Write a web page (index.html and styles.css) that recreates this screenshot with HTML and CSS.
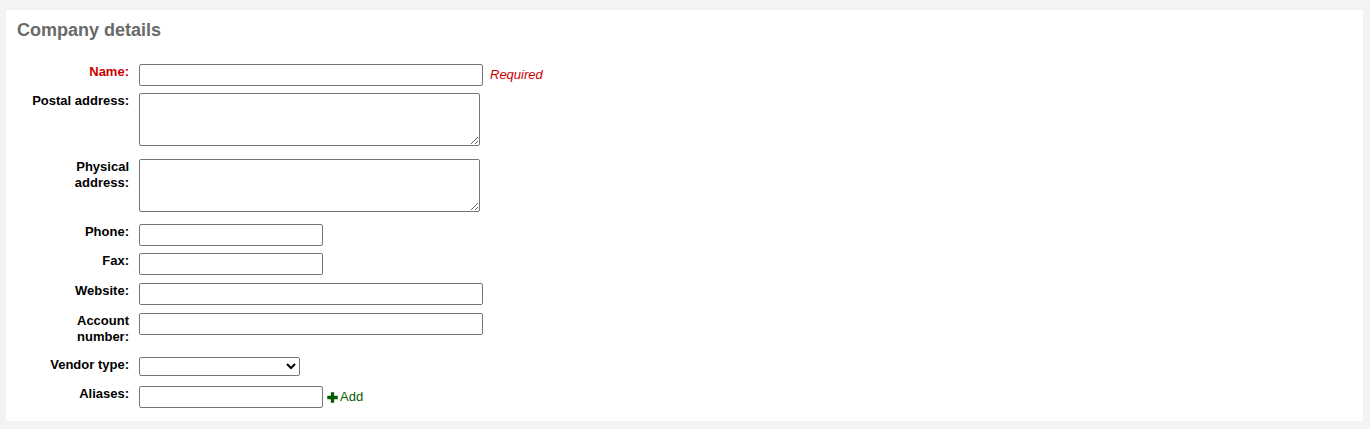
FILE: index.html
```html
<!DOCTYPE html>
<html lang="en">
<head>
<meta charset="utf-8">
<title>Company details</title>
<link rel="stylesheet" href="styles.css">
</head>
<body>
<div class="panel">
  <h2 class="title">Company details</h2>
  <ol class="rows">
    <li class="row row-name">
      <label class="lbl required" for="name">Name:</label>
      <input class="field wide" id="name" type="text">
      <span class="req-note">Required</span>
    </li>
    <li class="row row-area row-postal">
      <label class="lbl" for="postal">Postal address:</label>
      <textarea class="area" id="postal"></textarea>
    </li>
    <li class="row row-area">
      <label class="lbl" for="physical">Physical address:</label>
      <textarea class="area" id="physical"></textarea>
    </li>
    <li class="row row-short">
      <label class="lbl" for="phone">Phone:</label>
      <input class="field narrow" id="phone" type="text">
    </li>
    <li class="row">
      <label class="lbl" for="fax">Fax:</label>
      <input class="field narrow" id="fax" type="text">
    </li>
    <li class="row">
      <label class="lbl" for="website">Website:</label>
      <input class="field wide" id="website" type="text">
    </li>
    <li class="row row-account">
      <label class="lbl" for="account">Account number:</label>
      <input class="field wide" id="account" type="text">
    </li>
    <li class="row row-vendor">
      <label class="lbl" for="vtype">Vendor type:</label>
      <select class="sel" id="vtype"><option></option></select>
    </li>
    <li class="row row-last">
      <label class="lbl" for="aliases">Aliases:</label>
      <input class="field narrow" id="aliases" type="text">
      <a class="add-link" href="#"><svg class="plus" viewBox="0 0 12 12" width="11" height="11" aria-hidden="true"><path d="M4.2 0.3h3.6v3.9h3.9v3.6H7.8v3.9H4.2V7.8H0.3V4.2h3.9z" fill="#005c00"/></svg><span>Add</span></a>
    </li>
  </ol>
</div>
</body>
</html>
```

FILE: styles.css
```css
html, body {
  margin: 0;
  padding: 0;
}
body {
  background: #f2f3f2;
  font-family: "Liberation Sans", Arial, sans-serif;
  font-size: 13px;
  color: #000;
  padding: 10px 7px 8px 6px;
}
.panel {
  background: #fff;
  padding: 9px 11px 13px 11px;
}
.title {
  margin: 0;
  font-size: 18px;
  line-height: 22px;
  font-weight: bold;
  color: #696969;
}
.rows {
  list-style: none;
  margin: 23px 0 0 0;
  padding: 0;
}
.row {
  display: flex;
  align-items: flex-start;
  margin-bottom: 8px;
}
.row-name { margin-bottom: 7px; }
.row-area { margin-bottom: 12px; }
.row-postal { margin-bottom: 13px; }
.row-short { margin-bottom: 7px; }
.row-account { margin-bottom: 12px; }
.row-vendor { margin-bottom: 10px; }
.row-last { margin-bottom: 0; }
.lbl {
  flex: 0 0 100px;
  width: 100px;
  margin-left: 12px;
  margin-right: 10px;
  text-align: right;
  font-weight: bold;
  line-height: 16px;
}
.lbl.required { color: #cc0000; }
.field {
  box-sizing: border-box;
  height: 22px;
  border: 1px solid #767676;
  border-radius: 2px;
  padding: 1px 4px;
  font: 13px "Liberation Sans", Arial, sans-serif;
  margin: 0;
  background: #fff;
}
.wide { width: 344px; }
.narrow { width: 184px; }
.area {
  box-sizing: border-box;
  width: 341px;
  height: 53px;
  border: 1px solid #767676;
  border-radius: 2px;
  margin: 0;
  padding: 2px;
  font: 13px "Liberation Mono", monospace;
}
.sel {
  box-sizing: border-box;
  width: 161px;
  height: 19px;
  border: 1px solid #767676;
  border-radius: 2px;
  margin: 0;
  font: 13px "Liberation Sans", Arial, sans-serif;
  background: #fff;
}
.req-note {
  margin-left: 7px;
  margin-top: 3px;
  font-style: italic;
  color: #cc0000;
  line-height: 16px;
}
.add-link {
  display: flex;
  align-items: center;
  margin-left: 4px;
  margin-top: 3px;
  color: #006100;
  text-decoration: none;
  line-height: 16px;
}
.plus {
  display: block;
  margin-right: 2px;
}
```
